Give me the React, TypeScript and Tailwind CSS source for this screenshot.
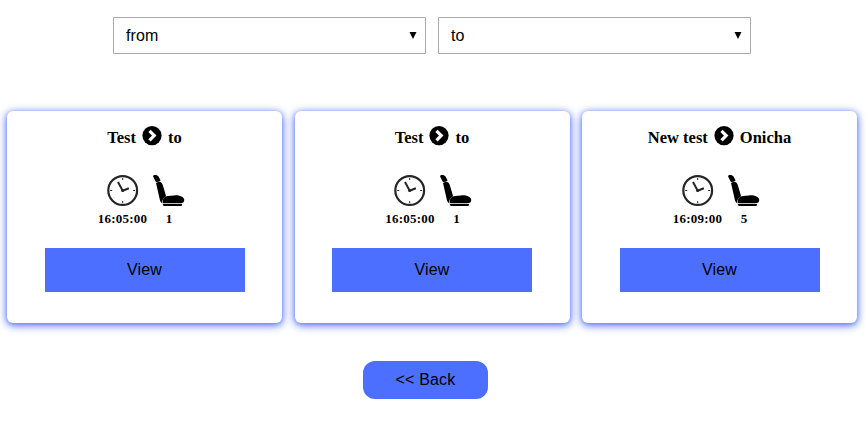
import React from "react";

type Trip = { from: string; to: string; time: string; seats: number };

const trips: Trip[] = [
  { from: "Test", to: "to", time: "16:05:00", seats: 1 },
  { from: "Test", to: "to", time: "16:05:00", seats: 1 },
  { from: "New test", to: "Onicha", time: "16:09:00", seats: 5 },
];

function ArrowIcon() {
  return (
    <svg className="mx-[6px] -mt-1 size-5 shrink-0" viewBox="0 0 20 20">
      <circle cx="10" cy="9.6" r="9.6" fill="#000" />
      <path d="M7.5 4.9 12.2 9.6 7.5 14.3" fill="none" stroke="#fff" strokeWidth="3.2" />
    </svg>
  );
}

function ClockIcon() {
  return (
    <svg className="size-8" viewBox="0 0 32 32" fill="none" stroke="#252525">
      <circle cx="15.7" cy="15.5" r="14.4" strokeWidth="2.2" />
      <path d="M15.7 3v2M15.7 26v2M3.2 15.5h2M26.2 15.5h2" strokeWidth="1" />
      <path d="M11 7.1 15.7 15.7l6.2-2.5" strokeWidth="2" />
      <circle cx="15.7" cy="15.5" r="1.6" fill="#252525" stroke="none" />
    </svg>
  );
}

function SeatIcon() {
  return (
    <svg className="size-8" viewBox="0 0 32 32" fill="#000">
      <path d="M0 1.2C.2.3 1 0 2.1 0c1.7 0 2.9.5 3.4 1.6L7.4 5c.1.8-.2 1.3-1 1.6l-2.3.5c-.7.1-1.3-.2-1.6-.9z" />
      <path d="M3 8.1c.4-.8 3.9-1.5 4.9-.9.8.5 1.5 1.6 1.9 2.8l3.3 11.3c-2.5 1.3-3.9 3.4-4.2 6.8-1.1-.8-1.6-1.8-2-3.2z" />
      <path d="M9.7 28.2c-.2-4.6 1.6-6.4 5.3-7.1l6-.7c5.3-.4 9.7 1.3 10.2 4.2.2 2.3-.9 3.6-2.9 3.6z" />
      <path d="M9.8 29h19.4c0 1.4-.6 2-1.7 2h-16c-1.1 0-1.7-.6-1.7-2z" />
    </svg>
  );
}

function SelectBox({ label }: { label: string }) {
  return (
    <button className="flex h-[37px] w-[313px] items-center justify-between rounded-[1px] border border-[#a9a9a9] bg-white pr-[8px] pl-3 text-base tracking-[0.15px] text-black">
      <span>{label}</span>
      <svg className="h-[7px] w-2" viewBox="0 0 8 7">
        <path d="M.5 0h7L4 7z" fill="#000" />
      </svg>
    </button>
  );
}

function TripCard({ trip }: { trip: Trip }) {
  return (
    <article className="flex h-[212px] w-[275px] flex-col items-center rounded-[6px] bg-white pt-[17px] font-['Liberation_Serif',serif] font-bold text-black shadow-[0_2px_10px_#4d6fff,0_1px_4px_#4d6fff80]">
      <h2 className="flex h-5 items-center text-[16.5px] leading-5">
        <span>{trip.from}</span>
        <ArrowIcon />
        <span>{trip.to}</span>
      </h2>
      <div className="mt-[27px] mr-[7px] flex gap-[7px] text-[13px] leading-4">
        <div className="flex w-[50px] flex-col items-center">
          <ClockIcon />
          <span className="mt-1 tracking-[0.22px]">{trip.time}</span>
        </div>
        <div className="-ml-[2px] flex w-8 flex-col items-center">
          <SeatIcon />
          <span className="mt-1 ml-px">{trip.seats}</span>
        </div>
      </div>
      <button className="mt-[21px] h-11 w-[200px] bg-[#4d6fff] font-['Liberation_Sans',Arial,sans-serif] text-base font-normal tracking-[0.15px]">
        View
      </button>
    </article>
  );
}

export default function App() {
  return (
    <main className="h-[425px] w-[866px] overflow-hidden bg-white pt-[17px] font-['Liberation_Sans',Arial,sans-serif]">
      <div className="flex gap-3 pl-[113px]">
        <SelectBox label="from" />
        <SelectBox label="to" />
      </div>
      <section className="mt-[57px] flex gap-[12.5px] pl-[7px]">
        {trips.map((trip, i) => (
          <TripCard key={i} trip={trip} />
        ))}
      </section>
      <button className="mt-[38px] ml-[363px] h-[38px] w-[125px] rounded-[12px] bg-[#4d6fff] text-base tracking-[0.15px] text-black">
        &lt;&lt; Back
      </button>
    </main>
  );
}
